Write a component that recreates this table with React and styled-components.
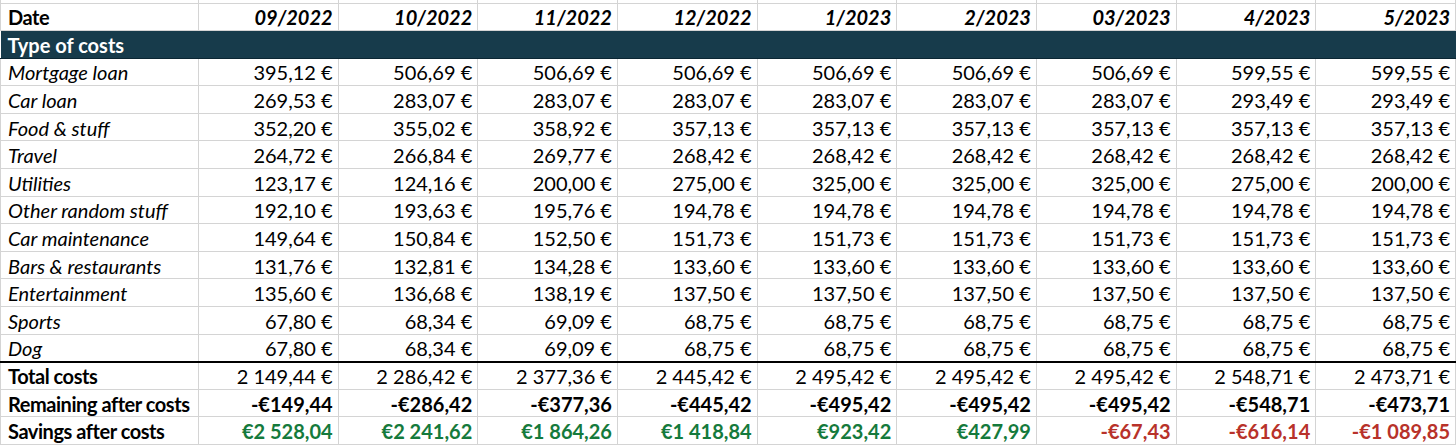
import React from "react";
import styled, { createGlobalStyle } from "styled-components";

const Global = createGlobalStyle`
  html, body { margin: 0; padding: 0; background: #fff; }
  body { font-family: Lato, "Open Sans", sans-serif; color: #000; }
`;

const Sheet = styled.table`
  width: 1456px;
  table-layout: fixed;
  border-collapse: collapse;
  font-size: 20px;
`;

const Col = styled.col`
  width: ${(p) => p.$w || "auto"};
`;

const Row = styled.tr`
  height: ${(p) => p.$h || 27.6}px;
  ${(p) => (p.$rule ? "border-bottom: 2px solid #000;" : "")}
`;

const Cell = styled.td`
  border: 1px solid #d4d4d4;
  padding: 1px 5px 0 7px;
  white-space: nowrap;
  overflow: hidden;
  line-height: 1;
  vertical-align: middle;
  text-align: ${(p) => (p.$num ? "right" : "left")};
  font-weight: ${(p) => (p.$bold ? 700 : 400)};
  font-style: ${(p) => (p.$italic ? "italic" : "normal")};
  color: ${(p) => p.$color || "#000"};
`;

const Label = styled(Cell)`
  letter-spacing: ${(p) => (p.$bold ? "-0.45px" : "0")};
`;

const Band = styled.td`
  background: #173b4b;
  border-top: 1px solid #0b2633;
  border-bottom: 1px solid #0b2633;
  color: #fff;
  font-weight: 700;
  padding: 1px 7px 0;
  line-height: 1;
  white-space: nowrap;
`;

const Spacer = styled.td`
  border: 1px solid #d4d4d4;
  border-top: none;
  padding: 0;
`;

const dates = ["09/2022", "10/2022", "11/2022", "12/2022", "1/2023", "2/2023", "03/2023", "4/2023", "5/2023"];

const items = [
  ["Mortgage loan", ["395,12", "506,69", "506,69", "506,69", "506,69", "506,69", "506,69", "599,55", "599,55"]],
  ["Car loan", ["269,53", "283,07", "283,07", "283,07", "283,07", "283,07", "283,07", "293,49", "293,49"]],
  ["Food & stuff", ["352,20", "355,02", "358,92", "357,13", "357,13", "357,13", "357,13", "357,13", "357,13"]],
  ["Travel", ["264,72", "266,84", "269,77", "268,42", "268,42", "268,42", "268,42", "268,42", "268,42"]],
  ["Utilities", ["123,17", "124,16", "200,00", "275,00", "325,00", "325,00", "325,00", "275,00", "200,00"]],
  ["Other random stuff", ["192,10", "193,63", "195,76", "194,78", "194,78", "194,78", "194,78", "194,78", "194,78"]],
  ["Car maintenance", ["149,64", "150,84", "152,50", "151,73", "151,73", "151,73", "151,73", "151,73", "151,73"]],
  ["Bars & restaurants", ["131,76", "132,81", "134,28", "133,60", "133,60", "133,60", "133,60", "133,60", "133,60"]],
  ["Entertainment", ["135,60", "136,68", "138,19", "137,50", "137,50", "137,50", "137,50", "137,50", "137,50"]],
  ["Sports", ["67,80", "68,34", "69,09", "68,75", "68,75", "68,75", "68,75", "68,75", "68,75"]],
  ["Dog", ["67,80", "68,34", "69,09", "68,75", "68,75", "68,75", "68,75", "68,75", "68,75"]],
];

const totals = ["2 149,44", "2 286,42", "2 377,36", "2 445,42", "2 495,42", "2 495,42", "2 495,42", "2 548,71", "2 473,71"];
const remaining = ["-€149,44", "-€286,42", "-€377,36", "-€445,42", "-€495,42", "-€495,42", "-€495,42", "-€548,71", "-€473,71"];
const savings = ["€2 528,04", "€2 241,62", "€1 864,26", "€1 418,84", "€923,42", "€427,99", "-€67,43", "-€616,14", "-€1 089,85"];

const GREEN = "#157a3c";
const RED = "#b8322a";

export default function App() {
  return (
    <>
      <Global />
      <Sheet>
        <colgroup>
          <Col $w="198px" />
          {dates.map((d) => (
            <Col key={d} />
          ))}
        </colgroup>
        <tbody>
          <Row $h={3}>
            {Array.from({ length: 10 }).map((_, i) => (
              <Spacer key={i} />
            ))}
          </Row>
          <Row>
            <Label $bold>Date</Label>
            {dates.map((d) => (
              <Cell key={d} $num $bold $italic>
                {d}
              </Cell>
            ))}
          </Row>
          <Row>
            <Band colSpan={10}>Type of costs</Band>
          </Row>
          {items.map(([label, vals], idx) => (
            <Row key={label} $rule={idx === items.length - 1}>
              <Label $italic>{label}</Label>
              {vals.map((v, i) => (
                <Cell key={i} $num>
                  {v} €
                </Cell>
              ))}
            </Row>
          ))}
          <Row>
            <Label $bold>Total costs</Label>
            {totals.map((v, i) => (
              <Cell key={i} $num>
                {v} €
              </Cell>
            ))}
          </Row>
          <Row>
            <Label $bold>Remaining after costs</Label>
            {remaining.map((v, i) => (
              <Cell key={i} $num $bold>
                {v}
              </Cell>
            ))}
          </Row>
          <Row>
            <Label $bold>Savings after costs</Label>
            {savings.map((v, i) => (
              <Cell key={i} $num $bold $color={v.startsWith("-") ? RED : GREEN}>
                {v}
              </Cell>
            ))}
          </Row>
        </tbody>
      </Sheet>
    </>
  );
}
